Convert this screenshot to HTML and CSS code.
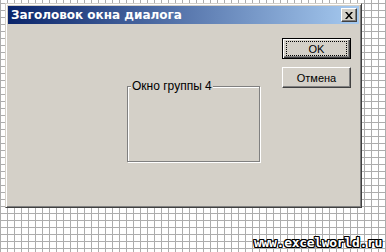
FILE: index.html
```html
<!DOCTYPE html>
<html>
<head>
<meta charset="utf-8">
<link rel="stylesheet" href="styles.css">
</head>
<body>
<div class="desktop">
  <div class="dialog">
    <div class="titlebar">
      <span class="title">Заголовок окна диалога</span>
      <span class="close">
        <svg width="8" height="7" viewBox="0 0 8 7"><path d="M0 0h2l2 2.5L6 0h2L5 3.5 8 7H6L4 4.5 2 7H0l3-3.5z" fill="#000"/></svg>
      </span>
    </div>
    <div class="client">
      <div class="group">
        <span class="legend">Окно группы 4</span>
      </div>
      <div class="buttons">
        <button class="btn default"><span class="focus">OK</span></button>
        <button class="btn">Отмена</button>
      </div>
    </div>
  </div>
  <div class="watermark">www.excelworld.ru</div>
</div>
</body>
</html>
```
FILE: styles.css
```css
html, body {
  margin: 0;
  padding: 0;
}
body {
  width: 386px;
  height: 252px;
  overflow: hidden;
  background-color: #fff;
  background-image:
    linear-gradient(to right, #adadad 1px, transparent 1px),
    linear-gradient(to bottom, #adadad 1px, transparent 1px);
  background-size: 7px 7px;
  background-position: 0 3px;
  font-family: Tahoma, "DejaVu Sans", sans-serif;
}
.desktop {
  position: relative;
  width: 386px;
  height: 252px;
}
.dialog {
  position: absolute;
  left: 5px;
  top: 3px;
  width: 357px;
  height: 205px;
  box-sizing: border-box;
  background: #d4d0c8;
  border-top: 1px solid #d4d0c8;
  border-left: 1px solid #d4d0c8;
  border-right: 1px solid #404040;
  border-bottom: 1px solid #404040;
  box-shadow: inset 1px 1px 0 #fff, inset -1px -1px 0 #808080;
  padding: 2px;
  display: flex;
  flex-direction: column;
}
.titlebar {
  height: 18px;
  background: linear-gradient(to right, #0a246a, #a6caf0);
  display: flex;
  align-items: center;
  justify-content: space-between;
  padding: 0 2px 0 3px;
}
.title {
  color: #fff;
  font-family: "DejaVu Sans", sans-serif;
  font-weight: bold;
  font-size: 12px;
}
.close {
  width: 16px;
  height: 14px;
  box-sizing: border-box;
  background: #d4d0c8;
  border-top: 1px solid #fff;
  border-left: 1px solid #fff;
  border-right: 1px solid #404040;
  border-bottom: 1px solid #404040;
  box-shadow: inset -1px -1px 0 #808080;
  display: flex;
  align-items: center;
  justify-content: center;
}
.client {
  flex: 1;
  display: flex;
  padding: 14px 8px 0 119px;
  gap: 22px;
}
.group {
  margin-top: 48px;
  width: 133px;
  height: 76px;
  box-sizing: border-box;
  border: 1px solid #808080;
  box-shadow: 1px 1px 0 #fff, inset 1px 1px 0 #fff;
  position: relative;
}
.legend {
  position: absolute;
  left: 3px;
  top: -8px;
  background: #d4d0c8;
  padding: 0 1px;
  font-family: "Liberation Sans", Arial, sans-serif;
  font-size: 12px;
  line-height: 14px;
  color: #000;
}
.buttons {
  display: flex;
  flex-direction: column;
  gap: 8px;
}
.btn {
  width: 69px;
  height: 21px;
  box-sizing: border-box;
  margin: 0;
  padding: 0;
  background: #d4d0c8;
  border-top: 1px solid #fff;
  border-left: 1px solid #fff;
  border-right: 1px solid #404040;
  border-bottom: 1px solid #404040;
  box-shadow: inset -1px -1px 0 #808080;
  font-family: "Liberation Sans", Arial, sans-serif;
  font-size: 11px;
  color: #000;
  display: flex;
  align-items: center;
  justify-content: center;
}
.btn.default {
  border: 1px solid #000;
  box-shadow: inset 1px 1px 0 #fff, inset -1px -1px 0 #404040, inset -2px -2px 0 #808080;
}
.focus {
  box-sizing: border-box;
  width: 59px;
  height: 13px;
  outline: 1px dotted #000;
  display: flex;
  align-items: center;
  justify-content: center;
}
.watermark {
  position: absolute;
  right: 4px;
  bottom: 2px;
  font-family: "DejaVu Sans Mono", monospace;
  font-weight: bold;
  font-size: 13px;
  color: #fff;
  letter-spacing: -0.3px;
  text-shadow: 1px 0 0 #000, -1px 0 0 #000, 0 1px 0 #000, 0 -1px 0 #000, 1px 1px 0 #000, -1px -1px 0 #000, 1px -1px 0 #000, -1px 1px 0 #000;
}
```
